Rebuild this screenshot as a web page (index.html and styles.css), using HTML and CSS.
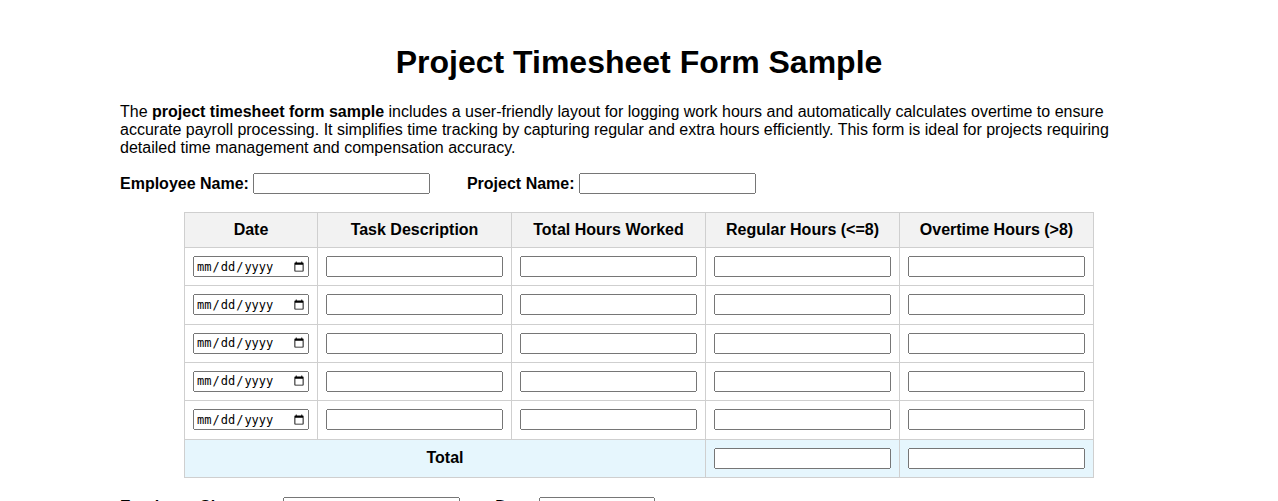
FILE: index.html
```html
<!DOCTYPE html>
<html lang="en">
<head>
<meta charset="utf-8">
<title>Project Timesheet Form Sample</title>
<link rel="stylesheet" href="styles.css">
</head>
<body>
<div class="container">
  <h1 class="title">Project Timesheet Form Sample</h1>
  <p class="intro">The <strong>project timesheet form sample</strong> includes a user-friendly layout for logging work hours and automatically calculates overtime to ensure accurate payroll processing. It simplifies time tracking by capturing regular and extra hours efficiently. This form is ideal for projects requiring detailed time management and compensation accuracy.</p>

  <div class="row">
    <div class="field"><label>Employee Name:</label><input type="text"></div>
    <div class="field"><label>Project Name:</label><input type="text"></div>
  </div>

  <table class="sheet">
    <thead>
      <tr>
        <th>Date</th>
        <th>Task Description</th>
        <th>Total Hours Worked</th>
        <th>Regular Hours (&lt;=8)</th>
        <th>Overtime Hours (&gt;8)</th>
      </tr>
    </thead>
    <tbody>
      <tr><td><input type="date" class="date"></td><td><input type="text"></td><td><input type="text"></td><td><input type="text"></td><td><input type="text"></td></tr>
      <tr><td><input type="date" class="date"></td><td><input type="text"></td><td><input type="text"></td><td><input type="text"></td><td><input type="text"></td></tr>
      <tr><td><input type="date" class="date"></td><td><input type="text"></td><td><input type="text"></td><td><input type="text"></td><td><input type="text"></td></tr>
      <tr><td><input type="date" class="date"></td><td><input type="text"></td><td><input type="text"></td><td><input type="text"></td><td><input type="text"></td></tr>
      <tr><td><input type="date" class="date"></td><td><input type="text"></td><td><input type="text"></td><td><input type="text"></td><td><input type="text"></td></tr>
      <tr class="total"><td colspan="3" class="total-label">Total</td><td><input type="text"></td><td><input type="text"></td></tr>
    </tbody>
  </table>

  <div class="row row-sign">
    <div class="field"><label>Employee Signature:</label><input type="text"></div>
    <div class="field"><label>Date:</label><input type="date" class="date"></div>
  </div>
</div>
</body>
</html>
```

FILE: styles.css
```css
html, body {
  margin: 0;
  padding: 0;
  background: #fff;
}

body {
  font-family: "Liberation Sans", Arial, sans-serif;
  font-size: 16px;
  color: #000;
}

.container {
  width: 1038px;
  margin: 0 auto;
}

.title {
  margin: 44px 0 22px;
  font-size: 32px;
  line-height: 37px;
  font-weight: bold;
  text-align: center;
}

.intro {
  margin: 0 0 16px;
  line-height: 18px;
}

.row {
  display: flex;
  align-items: center;
  gap: 37px;
  height: 21px;
}

.row-sign {
  gap: 35px;
  margin-top: 19px;
}

.field {
  display: flex;
  align-items: center;
  gap: 4px;
}

.field label {
  font-weight: bold;
  line-height: 18px;
}

input {
  box-sizing: border-box;
  width: 177px;
  height: 21px;
  margin: 0;
  font-family: "Liberation Sans", Arial, sans-serif;
  font-size: 13.33px;
}

input.date {
  width: 116px;
  font-family: "DejaVu Sans Mono", "Liberation Mono", monospace;
  font-size: 12px;
}

.sheet {
  margin: 18px auto 0;
  border-collapse: collapse;
}

.sheet th,
.sheet td {
  border: 1px solid #cfcfcf;
  padding: 8px;
  text-align: center;
}

.sheet th {
  background: #f2f2f2;
  font-weight: bold;
  line-height: 18px;
}

.sheet td {
  padding-bottom: 8.33px;
}

.sheet td input {
  display: block;
}

.total td {
  background: #e6f6fd;
}

.total-label {
  font-weight: bold;
  line-height: 18px;
  padding-top: 9px;
}
```
